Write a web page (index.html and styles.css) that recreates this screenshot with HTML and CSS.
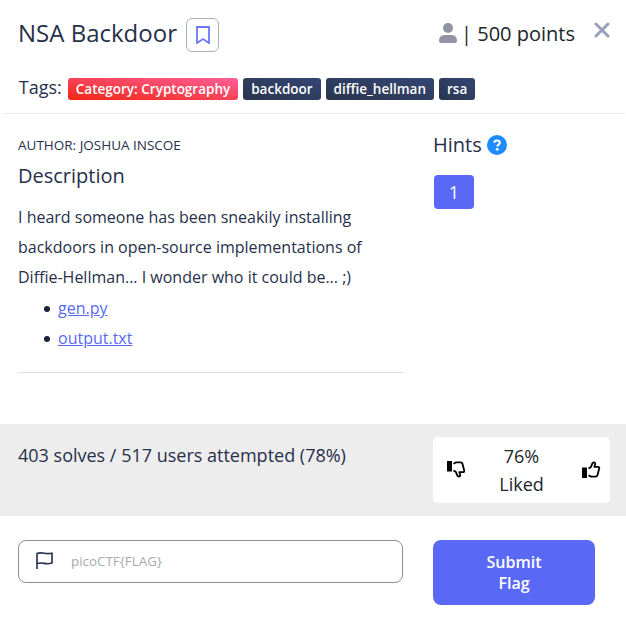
FILE: index.html
```html
<!DOCTYPE html>
<html lang="en">
<head>
<meta charset="utf-8">
<title>NSA Backdoor</title>
<link rel="stylesheet" href="styles.css">
</head>
<body>
<main class="modal">
  <header class="header">
    <div class="title-row">
      <h1 class="title">NSA Backdoor</h1>
      <button class="bookmark" aria-label="Bookmark">
        <svg width="14" height="18" viewBox="0 0 14 18"><path d="M1 1h12v16l-6-4-6 4z" fill="none" stroke="#6b78ff" stroke-width="1.8"/></svg>
      </button>
      <div class="points">
        <svg class="user" width="18" height="20" viewBox="0 0 18 20"><circle cx="9" cy="5" r="5"/><path d="M0 18c0-4 2.500-6 6-6h6c3.500 0 6 2 6 6 0 1.300-.6 2-1.500 2h-15C.6 20 0 19.300 0 18z"/></svg>
        <span>| 500 points</span>
      </div>
      <button class="close" aria-label="Close">
        <svg width="16" height="16" viewBox="0 0 16 16"><path d="M2 2l12 12M14 2L2 14" stroke="#98a0bc" stroke-width="3" stroke-linecap="round"/></svg>
      </button>
    </div>
    <div class="tags">
      <span class="tags-label">Tags:</span>
      <span class="tag tag-category">Category: Cryptography</span>
      <span class="tag">backdoor</span>
      <span class="tag">diffie_hellman</span>
      <span class="tag">rsa</span>
    </div>
  </header>
  <section class="content">
    <div class="details">
      <p class="author">AUTHOR: JOSHUA INSCOE</p>
      <h2 class="subtitle">Description</h2>
      <p class="description">I heard someone has been sneakily installing backdoors in open-source implementations of Diffie-Hellman... I wonder who it could be... ;)</p>
      <ul class="files">
        <li><a href="#">gen.py</a></li>
        <li><a href="#">output.txt</a></li>
      </ul>
      <hr class="rule">
    </div>
    <aside class="hints">
      <h2 class="hints-title">Hints
        <svg width="20" height="20" viewBox="0 0 20 20"><circle cx="10" cy="10" r="10" fill="#1e8bff"/><path d="M7.200 7.600C7.400 6.200 8.500 5.400 10 5.400c1.600 0 2.800.9 2.800 2.300 0 1.900-2.500 1.900-2.500 3.900" fill="none" stroke="#fff" stroke-width="2"/><circle cx="10.200" cy="14.300" r="1.400" fill="#fff"/></svg>
      </h2>
      <button class="hint">1</button>
    </aside>
  </section>
  <section class="stats">
    <p class="solves">403 solves / 517 users attempted (78%)</p>
    <div class="rating">
      <svg class="thumb down" width="19" height="17" viewBox="0 0 19 17"><path class="cuff" d="M0 6.500h5V17H0z"/><path class="hand" d="M6.500 7.500L8.800 6.200 10.400 2.300Q12.800.3 13.300 3L12.300 5.800H16.300Q17.600 6.200 17.200 7.500L15.400 14.400Q15 15.600 13.700 15.600H9L6.500 14.300"/></svg>
      <div class="liked">76%<br>Liked</div>
      <svg class="thumb" width="19" height="17" viewBox="0 0 19 17"><path class="cuff" d="M0 6.500h5V17H0z"/><path class="hand" d="M6.500 7.500L8.800 6.200 10.400 2.300Q12.800.3 13.300 3L12.300 5.800H16.300Q17.600 6.200 17.200 7.500L15.400 14.400Q15 15.600 13.700 15.600H9L6.500 14.300"/></svg>
    </div>
  </section>
  <form class="submit-row">
    <label class="flag-field">
      <svg width="17" height="17" viewBox="0 0 17 17"><path d="M1 17V1.500C4 .3 6 .8 8.500 1.300S13 1.800 16 1.200v9.800c-3 .9-5 .9-7.500.4S4 10.600 1 11.600" fill="none" stroke="#27304b" stroke-width="1.600"/></svg>
      <input class="flag-input" type="text" placeholder="picoCTF{FLAG}">
    </label>
    <button class="submit" type="button">Submit<br>Flag</button>
  </form>
</main>
</body>
</html>
```
FILE: styles.css
```css
* { box-sizing: border-box; }
body {
  margin: 0;
  background: #fff;
  color: #27304b;
  font: 16px/30px "Open Sans", sans-serif;
}
h1, h2, p, ul { margin: 0; font-weight: 400; }
button { font-family: inherit; padding: 0; border: 0; background: none; }
svg { display: block; flex: none; }
.header {
  height: 114px;
  margin: 0 1px 0 3px;
  padding: 18px 0 0 15px;
  border-bottom: 1px solid #e6e9ee;
}
.title-row { display: flex; align-items: flex-start; height: 60px; }
.title { font-size: 24px; line-height: 30px; white-space: nowrap; }
.bookmark {
  display: flex;
  align-items: center;
  justify-content: center;
  width: 33px;
  height: 34px;
  margin-left: 9px;
  padding-left: 1px;
  border: 1px solid #a9b0bd;
  border-radius: 6px;
}
.points {
  display: flex;
  gap: 4px;
  margin: 1px 0 0 auto;
  color: #212529;
  font-size: 20px;
  white-space: nowrap;
}
.user { margin-top: 4px; fill: #9194a1; }
.close { margin: 4px 15.500px 0 18.500px; }
.tags { display: flex; gap: 5px; height: 22px; align-items: center; }
.tags-label { margin: -5px 1px 0 0.800px; font-size: 18px; }
.tag {
  height: 22px;
  padding: 0 8px;
  border-radius: 3px;
  background: linear-gradient(to top right, #2a354d, #344675);
  color: #fff;
  font-size: 13.500px;
  font-weight: 600;
  line-height: 22px;
  white-space: nowrap;
}
.tag-category { background: linear-gradient(to top right, #f02615, #ff5f98); }
.content {
  display: grid;
  grid-template-columns: 385px 177px;
  column-gap: 30px;
  height: 310px;
  padding: 16px 0 0 18px;
}
.author { font-size: 13.500px; }
.subtitle { margin-top: 1px; font-size: 20px; }
.description { margin-top: 11px; }
.files { margin-top: 1px; padding-left: 26px; list-style: none; }
.files li { display: flex; align-items: center; gap: 8px; }
.files li::before {
  content: "";
  width: 6px;
  height: 6px;
  margin-top: 2px;
  border-radius: 50%;
  background: #1c2238;
}
.files a { color: #5968f5; text-decoration: underline; }
.rule { margin: 19px 0 0; border: 0; border-top: 1px solid #dedede; }
.hints-title {
  display: flex;
  gap: 5px;
  align-items: center;
  font-size: 20px;
}
.hint {
  width: 40px;
  height: 34px;
  margin: 15px 0 0 1px;
  border-radius: 4px;
  background: #5968f5;
  color: #fff;
  font-size: 18px;
  display: block;
}
.stats {
  display: grid;
  grid-template-columns: 385px 177px;
  column-gap: 30px;
  height: 92px;
  padding: 13px 0 0 18px;
  background: #ededed;
}
.solves { margin-top: 3px; font-size: 18px; }
.rating {
  display: flex;
  align-items: center;
  justify-content: space-between;
  height: 66px;
  padding: 0 9px 0 14px;
  border-radius: 5px;
  background: #fff;
  color: #212529;
}
.liked { margin-right: 5px; font-size: 18px; line-height: 28px; text-align: center; }
.thumb { margin-bottom: 1px; }
.thumb .hand { fill: none; stroke: #000; stroke-width: 1.800; stroke-linejoin: round; }
.down { transform: scaleY(-1); }
.submit-row {
  display: grid;
  grid-template-columns: 385px 162px;
  column-gap: 30px;
  align-items: start;
  padding: 24px 0 0 18px;
}
.flag-field {
  display: flex;
  align-items: center;
  gap: 18px;
  height: 43px;
  padding: 0 0 2px 17px;
  border: 1px solid #8d8f9f;
  border-radius: 8px;
}
.flag-input {
  flex: 1;
  min-width: 0;
  padding: 0;
  border: 0;
  outline: 0;
  background: none;
  font: 13.400px "Open Sans", sans-serif;
}
.flag-input::placeholder { color: #a6aab2; }
.submit {
  height: 65px;
  border-radius: 8px;
  background: #5968f5;
  color: #fff;
  font-size: 16px;
  font-weight: 600;
  line-height: 21px;
}
```
